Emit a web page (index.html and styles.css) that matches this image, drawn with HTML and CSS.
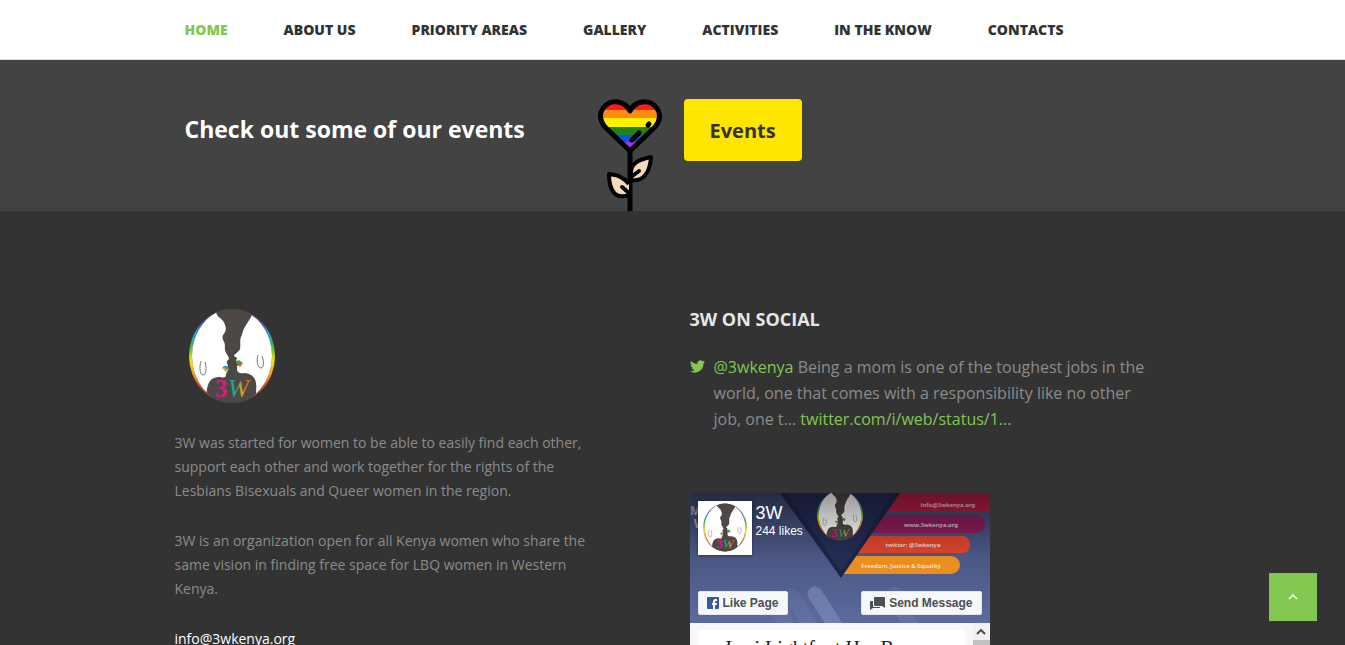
FILE: index.html
```html
<!DOCTYPE html>
<html lang="en">
<head>
    <meta charset="UTF-8">
    <meta name="viewport" content="width=device-width, initial-scale=1.0">
    <title>3W Kenya</title>
    <link rel="stylesheet" href="styles.css">
</head>
<body>
    <!-- 3W logo, reused in the footer, page avatar and cover -->
    <svg width="0" height="0" class="defs" aria-hidden="true">
        <defs>
            <linearGradient id="rainbow" x1="0" y1="0" x2="0" y2="1">
                <stop offset="0" stop-color="#4d4846"/>
                <stop offset="0.12" stop-color="#5b3fa0"/>
                <stop offset="0.26" stop-color="#1e9fd8"/>
                <stop offset="0.4" stop-color="#4fb848"/>
                <stop offset="0.55" stop-color="#f7e600"/>
                <stop offset="0.7" stop-color="#f39a1e"/>
                <stop offset="0.84" stop-color="#d8452c"/>
                <stop offset="1" stop-color="#4d4846"/>
            </linearGradient>
            <linearGradient id="wcolor" x1="0" y1="0" x2="1" y2="0">
                <stop offset="0" stop-color="#2196d6"/>
                <stop offset="0.35" stop-color="#2aa876"/>
                <stop offset="0.65" stop-color="#f0a01e"/>
                <stop offset="1" stop-color="#e04a2a"/>
            </linearGradient>
            <clipPath id="oval"><ellipse cx="44" cy="48" rx="40" ry="47"/></clipPath>
        </defs>
        <symbol id="logo3w" viewBox="0 0 88 96">
            <ellipse cx="44" cy="48" rx="43" ry="47" fill="url(#rainbow)"/>
            <g clip-path="url(#oval)">
                <rect width="88" height="96" fill="#4d4846"/>
                <path d="M0 0H24L28 4C29 10 36 11 37 17C39 21 37 25 35 27C33 31 37 33 37 38C36 42 38 45 41 50C41 53 38 52 39 55L40 58L36 60L40 62L38 66C38 70 36 70 32 69C26 69 22 71 20 77C18 83 19 88 17 96H0Z" fill="#fff"/>
                <path d="M88 0H68L64 7C61 14 55 19 54 27C51 31 53 36 52 41C51 44 46 46 46 48L49 50L48 53L54 55L49 58L49 61C49 65 52 66 57 65C64 66 68 70 68 76C69 81 67 84 69 92H88Z" fill="#fff"/>
            </g>
            <path d="M34 60Q37 56 40 59L41 61Z" fill="#1ba7d8"/>
            <path d="M34 60L41 61L38 64Z" fill="#e9a41c"/>
            <path d="M48 53L51 52L55 55L49 56Z" fill="#35a95d"/>
            <path d="M49 56L55 55L52 59Z" fill="#e5521f"/>
            <path d="M13 53C11 60 12 67 15 67S19 60 17 54M70 47C68 54 70 60 73 60S76 53 74 48" fill="none" stroke="#777" stroke-width="1"/>
            <text x="27" y="89" class="mark mark-3">3</text>
            <text x="40" y="89" class="mark mark-w">W</text>
        </symbol>
    </svg>

    <header class="header">
        <nav class="container nav">
            <a href="#" class="active">Home</a>
            <a href="#">About us</a>
            <a href="#">Priority areas</a>
            <a href="#">Gallery</a>
            <a href="#">Activities</a>
            <a href="#">In the know</a>
            <a href="#">Contacts</a>
        </nav>
    </header>

    <section class="events">
        <div class="container events-row">
            <h2>Check out some of our events</h2>
            <svg class="flower" width="66" height="113" viewBox="0 0 66 113" aria-hidden="true">
                <defs>
                    <clipPath id="heart"><path d="M33 53L8 29C-3 15 9 2 21 4C28 5 31 9 33 13C35 9 38 5 45 4C57 2 69 15 58 29Z"/></clipPath>
                </defs>
                <g clip-path="url(#heart)">
                    <rect width="66" height="12" fill="#fb1c20"/>
                    <rect y="12" width="66" height="8" fill="#ff8b0c"/>
                    <rect y="20" width="66" height="9" fill="#fff000"/>
                    <rect y="29" width="66" height="8" fill="#23801c"/>
                    <rect y="37" width="66" height="7" fill="#0754f5"/>
                    <rect y="44" width="66" height="10" fill="#a930ed"/>
                </g>
                <path d="M33 53V113" stroke="#000" stroke-width="5"/>
                <path d="M33 53L8 29C-3 15 9 2 21 4C28 5 31 9 33 13C35 9 38 5 45 4C57 2 69 15 58 29Z" fill="none" stroke="#000" stroke-width="5" stroke-linejoin="round"/>
                <path d="M35 42L42 35M51 27L52 26" stroke="#000" stroke-width="5" stroke-linecap="round"/>
                <path d="M34 82C32 66 39 62 54 59C53 75 46 84 34 82ZM32 86C25 78 20 77 12 76C12 92 18 102 32 97" fill="#f6d8bd" stroke="#000" stroke-width="4" stroke-linejoin="round"/>
                <path d="M34 79L42 73M32 95L25 89" stroke="#000" stroke-width="4" stroke-linecap="round"/>
            </svg>
            <button type="button" class="events-btn">Events</button>
        </div>
    </section>

    <footer class="footer">
        <div class="container footer-grid">
            <div class="about">
                <svg class="logo" width="88" height="96" role="img" aria-label="3W"><use href="#logo3w"/></svg>
                <p>3W was started for women to be able to easily find each other, support each other and work together for the rights of the Lesbians Bisexuals and Queer women in the region.</p>
                <p>3W is an organization open for all Kenya women who share the same vision in finding free space for LBQ women in Western Kenya.</p>
                <a href="mailto:info@3wkenya.org">info@3wkenya.org</a>
            </div>

            <div class="social">
                <h3>3W on social</h3>
                <div class="tweet">
                    <svg width="15" height="13" viewBox="0 0 24 20" aria-hidden="true">
                        <path fill="#82c74f" d="M24 2.400a10 10 0 0 1-2.800.8A5 5 0 0 0 23.300.500a10 10 0 0 1-3.100 1.200 4.900 4.900 0 0 0-8.400 4.500A14 14 0 0 1 1.700 1a4.900 4.900 0 0 0 1.500 6.600 5 5 0 0 1-2.200-.6 4.900 4.900 0 0 0 3.900 4.900 5 5 0 0 1-2.200.1 4.900 4.900 0 0 0 4.600 3.400A10 10 0 0 1 0 17.500 14 14 0 0 0 21.500 5 10 10 0 0 0 24 2.400z"/>
                    </svg>
                    <p><a href="#">@3wkenya</a> Being a mom is one of the toughest jobs in the world, one that comes with a responsibility like no other job, one t... <a href="#">twitter.com/i/web/status/1...</a></p>
                </div>

                <div class="fb">
                    <div class="fb-cover">
                        <svg class="fb-art" viewBox="0 0 300 130" aria-hidden="true">
                            <defs>
                                <linearGradient id="sky" x1="0" y1="0" x2="0" y2="1">
                                    <stop offset="0" stop-color="#3d4870"/>
                                    <stop offset="0.5" stop-color="#4b5884"/>
                                    <stop offset="1" stop-color="#5c6b9e"/>
                                </linearGradient>
                                <linearGradient id="shade" x1="0" y1="0" x2="0" y2="1">
                                    <stop offset="0" stop-color="#000" stop-opacity="0.4"/>
                                    <stop offset="1" stop-color="#000" stop-opacity="0"/>
                                </linearGradient>
                            </defs>
                            <rect width="300" height="130" fill="url(#sky)"/>
                            <g stroke="#8794c4" stroke-linecap="round" stroke-width="15">
                                <path d="M80 104L102 140M103 104L125 140" stroke-opacity="0.15"/>
                                <path d="M125 101L150 140" stroke-opacity="0.5"/>
                                <path d="M204 101L225 140" stroke-opacity="0.2"/>
                            </g>
                            <text x="0" y="22" class="cover-side">M</text>
                            <text x="4" y="35" class="cover-side">W</text>
                            <path d="M190 0H300V19H190Z" fill="#b51d42"/>
                            <path d="M170 22H286a9 9 0 0 1 0 18H170Z" fill="#8b1c5c"/>
                            <path d="M160 43H274a9 9 0 0 1 0 17H160Z" fill="#db452d"/>
                            <path d="M150 63H261a9 9 0 0 1 0 18H150Z" fill="#ea8e20"/>
                            <path d="M90 0H210L151 85Z" fill="#1d2547"/>
                            <path d="M96 0H204L151 78Z" fill="#232c54"/>
                            <text x="258" y="14" class="cover-text">info@3wkenya.org</text>
                            <text x="241" y="34" class="cover-text">www.3wkenya.org</text>
                            <text x="223" y="54" class="cover-text">twitter: @3wkenya</text>
                            <text x="211" y="75" class="cover-text">Freedom, Justice &amp; Equality</text>
                            <use href="#logo3w" x="126" y="-3" width="48" height="51"/>
                            <rect width="300" height="65" fill="url(#shade)"/>
                        </svg>
                        <div class="fb-content">
                            <div class="fb-head">
                                <svg class="fb-avatar" width="54" height="54" viewBox="0 0 54 54" aria-hidden="true"><rect width="54" height="54" fill="#fff"/><use href="#logo3w" x="3" y="2" width="48" height="49"/></svg>
                                <div>
                                    <a href="#" class="fb-name">3W</a>
                                    <span>244 likes</span>
                                </div>
                            </div>
                            <div class="fb-actions">
                                <button type="button">
                                    <svg width="12" height="12" viewBox="0 0 12 12" aria-hidden="true"><rect width="12" height="12" rx="1" fill="#3b5998"/><path d="M6 12V8H5V6H6V4.500Q6 2 8.500 2H10V4H9Q8 4 8 5V6H10L9.700 8H8V12Z" fill="#fff"/></svg>
                                    Like Page
                                </button>
                                <button type="button">
                                    <svg width="15" height="13" viewBox="0 0 15 13" aria-hidden="true"><path d="M5 0H14Q15 0 15 1V11L12 9H5Q4 9 4 8V1Q4 0 5 0Z" fill="#4b4f56"/><path d="M3 4H1Q0 4 0 5V13L3 11H10V10H4Q3 10 3 9Z" fill="#4b4f56"/></svg>
                                    Send Message
                                </button>
                            </div>
                        </div>
                    </div>
                    <div class="fb-feed">
                        <div class="fb-post">Lori Lightfoot Her Barry</div>
                        <div class="fb-scroll">
                            <svg width="17" height="17" viewBox="0 0 17 17" aria-hidden="true"><path d="M4 11L8 7L12 11" fill="none" stroke="#505050" stroke-width="2"/></svg>
                            <i></i>
                        </div>
                    </div>
                </div>
            </div>
        </div>
    </footer>

    <a href="#" class="to-top" aria-label="Back to top">
        <svg width="10" height="6" viewBox="0 0 10 6" aria-hidden="true"><path d="M1 5L5 1L9 5" fill="none" stroke="#fff" stroke-width="1.500"/></svg>
    </a>
</body>
</html>
```
FILE: styles.css
```css
* {
    padding: 0;
    margin: 0;
    box-sizing: border-box;
}

body {
    font-family: 'Open Sans', sans-serif;
    height: 100vh;
    display: flex;
    flex-direction: column;
    overflow: hidden;
    background: #333;
}

a {
    text-decoration: none;
}

svg {
    display: block;
    flex-shrink: 0;
}

.defs {
    position: absolute;
}

.container {
    width: 100%;
    max-width: 996px;
    margin: 0 auto;
}

/* Top menu */
.header {
    flex-shrink: 0;
    background: #fff;
    border-bottom: 1px solid #e4e4e4;
}

.nav {
    display: flex;
    align-items: center;
    gap: 56px;
    height: 59px;
    padding-left: 10px;
}

.nav a {
    color: #333;
    font-size: 14px;
    font-weight: 800;
    text-transform: uppercase;
    white-space: nowrap;
}

.nav .active {
    color: #82c74f;
}

/* Events banner */
.events {
    flex-shrink: 0;
    background: #434343;
}

.events-row {
    display: flex;
    align-items: flex-start;
    padding: 38px 10px 0;
}

.events h2 {
    width: 412px;
    color: #fff;
    font-size: 23px;
    font-weight: 700;
    line-height: 62px;
}

.events-btn {
    height: 62px;
    margin: 1px 0 0 21px;
    padding: 0 26px;
    border: none;
    border-radius: 4px;
    background: #ffe600;
    color: #333;
    font: 700 20px 'Open Sans', sans-serif;
    cursor: pointer;
}

/* Footer */
.footer {
    flex: 1;
    min-height: 0;
    overflow: hidden;
    color: #8b8b8b;
}

.footer-grid {
    display: grid;
    grid-template-columns: 1fr 1fr;
    gap: 34px;
    padding-top: 97px;
}

.about {
    padding-right: 60px;
    font-size: 14px;
    line-height: 24px;
}

.about p {
    margin-bottom: 26px;
}

.about a {
    color: #fff;
}

.logo {
    margin: 0 0 27px 13px;
}

.mark {
    font-size: 25px;
    font-family: 'Liberation Serif', serif;
}

.mark-3 {
    fill: #d81b80;
    font-weight: bold;
}

.mark-w {
    fill: url(#wcolor);
    font-style: italic;
}

.social h3 {
    color: #e6e6e6;
    font-size: 18px;
    font-weight: 700;
    line-height: 22px;
    text-transform: uppercase;
}

.tweet {
    display: flex;
    gap: 9px;
    margin: 24px 0 61px;
    padding-right: 20px;
    font-size: 16px;
    line-height: 26px;
}

.tweet svg {
    margin-top: 6px;
}

.tweet a {
    color: #82c74f;
}

/* Facebook page box */
.fb {
    width: 300px;
    background: #f6f7f9;
    font-family: 'Liberation Sans', sans-serif;
}

.fb-cover {
    display: grid;
}

.fb-art,
.fb-content {
    grid-area: 1 / 1;
}

.fb-content {
    display: flex;
    flex-direction: column;
    justify-content: space-between;
    padding: 8px;
}

.fb-head {
    display: flex;
    gap: 4px;
    color: #fff;
    font-size: 12px;
}

.fb-head span {
    display: block;
    line-height: 12px;
}

.fb-name {
    display: block;
    color: #fff;
    font-size: 18px;
    line-height: 24px;
}

.fb-avatar {
    box-shadow: 0 1px 3px rgba(0,0,0,0.4);
}

.fb-actions {
    display: flex;
    justify-content: space-between;
}

.fb-actions button {
    display: flex;
    align-items: center;
    gap: 4px;
    height: 24px;
    padding: 0 8px;
    border: 1px solid #e4e6ea;
    border-radius: 2px;
    background: #f6f7f9;
    color: #4b4f56;
    font: bold 12px 'Liberation Sans', sans-serif;
}

.cover-text {
    fill: #fff;
    fill-opacity: 0.8;
    font: 600 6px 'Noto Sans', sans-serif;
    text-anchor: middle;
}

.cover-side {
    fill: #aab;
    font: bold 12px 'Open Sans', sans-serif;
}

.fb-feed {
    display: flex;
    justify-content: space-between;
    padding-left: 8px;
}

.fb-post {
    width: 267px;
    height: 200px;
    margin-top: 7px;
    padding-left: 28px;
    overflow: hidden;
    background: #fff;
    color: #1d2129;
    font: 20px/36px 'Liberation Serif', serif;
}

.fb-scroll {
    width: 17px;
    background: #f1f1f1;
}

.fb-scroll i {
    display: block;
    height: 100px;
    background: #c1c1c1;
}

/* Back to top */
.to-top {
    position: fixed;
    right: 28px;
    bottom: 24px;
    display: flex;
    align-items: center;
    justify-content: center;
    width: 48px;
    height: 48px;
    background: #82c74f;
}
```
